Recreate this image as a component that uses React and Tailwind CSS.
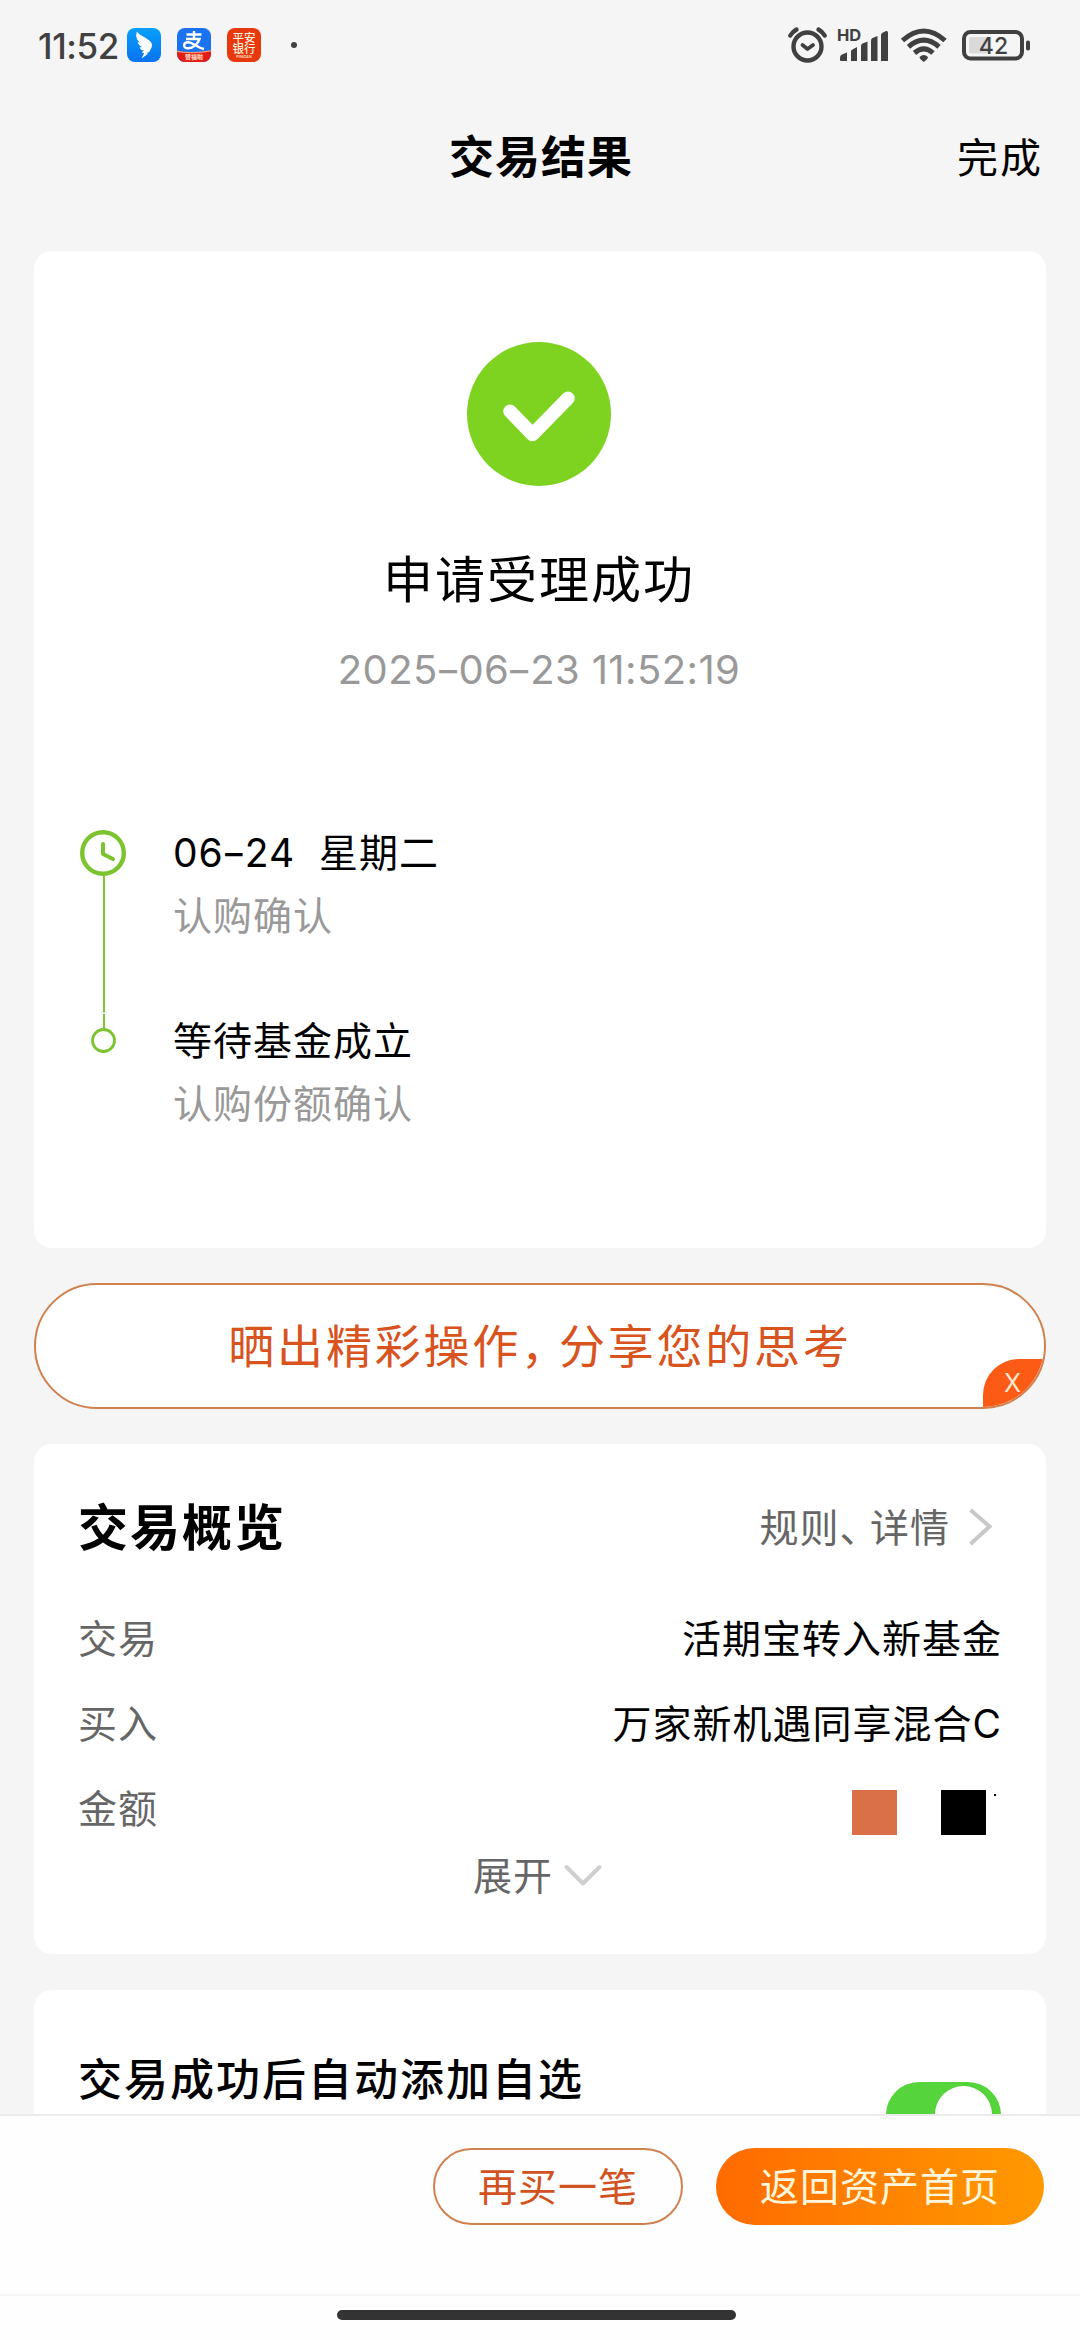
import React, { useState } from "react";

const steps = [
  { title: "06-24  星期二", desc: "认购确认" },
  { title: "等待基金成立", desc: "认购份额确认" },
];

const rows = [
  { label: "交易", value: "活期宝转入新基金" },
  { label: "买入", value: "万家新机遇同享混合C" },
];

// hyphens are drawn wider than the font's own
function Digits({ text }) {
  return text.split(/(-)/).map((part, i) =>
    part === "-" ? (
      <span key={i} className="mx-[1px] inline-block scale-x-140">
        -
      </span>
    ) : (
      <span key={i}>{part}</span>
    )
  );
}

function StatusBar() {
  return (
    <div className="flex h-[90px] items-center justify-between pl-[38px] pr-[50px] text-[#404040]">
      <div className="flex items-center">
        <span className="w-[89px] pt-[1px] text-[35px] font-medium leading-[40px] tracking-[-0.4px]">11:52</span>
        <svg width="34" height="34" viewBox="0 0 34 34">
          <defs>
            <linearGradient id="wing" x1="0" y1="0" x2="0" y2="1">
              <stop offset="0" stopColor="#06a0fb" />
              <stop offset="1" stopColor="#0a72f0" />
            </linearGradient>
          </defs>
          <rect width="34" height="34" rx="8" fill="url(#wing)" />
          <path
            d="M10 3.500C12 7 16.500 8.500 19.500 10.500C22.500 12.300 25.200 14.500 25 17.500C24.800 19.800 23.300 21.500 22.300 24L20.200 24.800L20.800 26L14.500 30.500L17.200 25.200L14.600 24.600L17 22.600C14.600 22 13 21 12.600 19.400L15.200 19C13 18 11.200 16.500 10.500 14.200L13 14.600C10.800 12.800 9.600 11 9.300 8.500C9.100 6.700 9.400 5 10 3.500Z"
            fill="#fff"
          />
        </svg>
        <svg className="ml-[16px]" width="34" height="34" viewBox="0 0 34 34">
          <defs>
            <clipPath id="payClip">
              <rect width="34" height="34" rx="8" />
            </clipPath>
          </defs>
          <g clipPath="url(#payClip)">
            <rect width="34" height="34" fill="#1b72ee" />
            <path
              d="M9.500 6.500H24.500M17 3V10.500M9 11H22.500C21 15.500 16.500 20.300 11 20.300C5.500 20.300 6 14 11.500 14.300C16.500 14.800 20 19.500 27 21"
              fill="none"
              stroke="#fff"
              strokeWidth="2.400"
            />
            <path d="M0 23.500Q17 26 34 23V34H0Z" fill="#e21c16" />
            <path d="M0 23.300Q17 26 34 22.800" fill="none" stroke="#f59a70" strokeWidth="1.200" />
            <text x="17" y="31.300" textAnchor="middle" fontSize="6" fontWeight="700" fill="#ffe3c8">
              赞福啦
            </text>
          </g>
        </svg>
        <div className="ml-[16px] flex size-[34px] flex-col items-center rounded-[8px] bg-[#e8380d] pt-[5px] text-[11.500px] font-medium leading-[11px] text-[#fff0dc]">
          <span>平安</span>
          <span>银行</span>
          <span className="text-[4px] leading-[4px]">PINGAN</span>
        </div>
        <span className="ml-[30px] size-[6px] rounded-full bg-[#404040]" />
      </div>
      <svg width="243" height="38" viewBox="786 26 243 38" fill="none" stroke="#404040">
        <circle cx="806.500" cy="46.500" r="14" strokeWidth="4.400" />
        <path d="M801.500 45L806.500 49L812 45" strokeWidth="3.800" strokeLinecap="round" strokeLinejoin="round" />
        <path d="M789.300 35.500Q791.500 31.800 795.500 29.500M823.700 35.500Q821.500 31.800 817.500 29.500" strokeWidth="4.400" strokeLinecap="round" />
        <text x="836" y="41" fontSize="16.500" fontWeight="700" fill="#404040" stroke="none">
          HD
        </text>
        <g fill="#404040" stroke="none">
          <path d="M839 57.500Q839 55.500 841 54.500L846 52.500V61H840Q839 61 839 60Z" />
          <path d="M850 51.500Q850 50 851.500 49.500L856 47V61H850Z" />
          <path d="M860 46Q860 44 861.500 43.500L866.500 41.500V61H860Z" />
          <path d="M870 40.500Q870 38.800 871.500 38L876.500 36V61H870Z" />
          <path d="M880 35Q880 33.500 881.500 32.700L885 31Q887 30.500 887 32.500V61H880Z" />
          <path d="M918.500 57Q922.800 53 927 57Q927 59 922.800 62Q918.500 59 918.500 57Z" />
        </g>
        <path d="M901.500 40.500Q922.800 21.500 944 40.500" strokeWidth="5" />
        <path d="M907.500 46.800Q922.800 33.600 938 46.800" strokeWidth="5" />
        <path d="M913.500 53Q922.800 44.800 932 53" strokeWidth="5" />
        <rect x="963" y="32" width="58" height="26.500" rx="6.500" strokeWidth="4" />
        <rect x="968" y="37" width="19" height="16.500" rx="2" fill="#dadada" stroke="none" />
        <rect x="1025" y="40.500" width="4" height="10" rx="1.800" fill="#404040" stroke="none" />
        <text x="992.500" y="54" textAnchor="middle" fontSize="23" fontWeight="500" fill="#404040" stroke="none">
          42
        </text>
      </svg>
    </div>
  );
}

function ResultCard() {
  return (
    <section className="mx-[34px] h-[997px] rounded-[18px] bg-white pt-[91px]">
      <div className="flex flex-col items-center pr-[2px]">
        <svg width="144" height="144" viewBox="0 0 144 144">
          <circle cx="72" cy="72" r="72" fill="#7ed321" />
          <path d="M43 69.300L65.500 92.500L101 56.300" fill="none" stroke="#fff" strokeWidth="13.500" strokeLinecap="round" strokeLinejoin="round" />
        </svg>
        <h2 className="mt-[64px] text-[50px] leading-[60px] tracking-[2px]">申请受理成功</h2>
        <p className="mt-[35px] text-[40px] leading-[50px] tracking-[0.400px] text-[#999]">
          <Digits text="2025-06-23 11:52:19" />
        </p>
      </div>

      {/* timeline */}
      <div className="mt-[133px] flex pl-[46px]">
        <svg width="46" height="226" viewBox="0 0 46 226" fill="none" stroke="#7bc42f">
          <circle cx="23" cy="25" r="20.800" strokeWidth="4.400" />
          <path d="M23 16V26L33 31" strokeWidth="4" strokeLinecap="round" strokeLinejoin="round" />
          <path d="M24 48V184.500M24 186V201" strokeWidth="2" />
          <circle cx="23.500" cy="212.500" r="11" strokeWidth="2.800" />
        </svg>
        <div className="ml-[47px] flex flex-col gap-[75px]">
          {steps.map((s) => (
            <div key={s.desc}>
              <p className="whitespace-pre text-[39px] leading-[50px] tracking-[1px]">
                <Digits text={s.title} />
              </p>
              <p className="mt-[13px] text-[39px] leading-[50px] tracking-[1px] text-[#999]">{s.desc}</p>
            </div>
          ))}
        </div>
      </div>
    </section>
  );
}

function ShareBanner({ onClose }) {
  return (
    <div className="relative mx-[34px] mt-[35px] flex h-[126px] items-center justify-center overflow-hidden rounded-full border-2 border-[#d0814f] bg-white">
      <p className="text-[46px] leading-[60px] tracking-[2.800px] text-[#d9531e]">
        晒出精彩操作<span className="mr-[12px] [font-feature-settings:'halt']">，</span>分享您的思考
      </p>
      <button
        onClick={onClose}
        className="absolute bottom-0 right-0 flex h-[48px] w-[61px] items-center justify-center rounded-tl-[36px] bg-[#fb5b14] pr-[2px] pt-[1px] text-[25px] text-[#ffe9d2]"
      >
        X
      </button>
    </div>
  );
}

function Overview() {
  return (
    <section className="mx-[34px] mt-[35px] h-[510px] rounded-[18px] bg-white pl-[44px] pr-[45px] pt-[54px] text-[39px] tracking-[1px]">
      <div className="flex h-[60px] items-center justify-between">
        <h3 className="text-[50px] font-bold leading-[60px] tracking-[2px]">交易概览</h3>
        <div className="flex items-center pr-[7px] text-[#666]">
          <span>
            规则<span className="mr-[10px] [font-feature-settings:'halt']">、</span>详情
          </span>
          <svg className="ml-[18px]" width="26" height="40" viewBox="0 0 26 40" fill="none">
            <path d="M2.500 2L21.500 18.500L2.500 36" stroke="#c8c8c8" strokeWidth="4" />
          </svg>
        </div>
      </div>
      <div className="mt-[39px]">
        {rows.map((r) => (
          <div key={r.label} className="flex h-[85px] items-center justify-between">
            <span className="text-[#666]">{r.label}</span>
            <span className="-mr-[1px]">{r.value}</span>
          </div>
        ))}
        <div className="flex h-[85px] items-center justify-between">
          <span className="text-[#666]">金额</span>
          <div className="flex pr-[5px] pt-[5px]">
            <span className="size-[45px] bg-[#da7047]" />
            <span className="ml-[44px] size-[45px] bg-black" />
            <span className="ml-[8px] mt-[4px] h-[2px] w-[2px] bg-black" />
          </div>
        </div>
      </div>
      <button className="mx-auto -mt-[1px] flex h-[50px] items-center pr-[4px] tracking-[1px] text-[#666]">
        展开
        <svg className="ml-[11px]" width="38" height="24" viewBox="0 0 38 24" fill="none">
          <path d="M2.500 3L19 19.500L35.500 3" stroke="#cfcfcf" strokeWidth="4" strokeLinecap="round" strokeLinejoin="round" />
        </svg>
      </button>
    </section>
  );
}

export default function App() {
  const [showShare, setShowShare] = useState(true);
  const [autoAdd, setAutoAdd] = useState(true);

  return (
    <div className="flex h-[2340px] w-[1080px] flex-col overflow-hidden bg-[#f5f5f5] font-[Inter,'Noto_Sans_CJK_SC',sans-serif] text-black">
      <div className="min-h-0 flex-1 overflow-hidden">
        <StatusBar />
        <header className="mb-[25px] grid h-[136px] grid-cols-3 items-center">
          <span />
          <h1 className="pl-[2px] text-center text-[45px] font-bold leading-[60px] tracking-[1px]">交易结果</h1>
          <button className="justify-self-end pr-[37px] text-[41px] leading-[60px] tracking-[2px]">完成</button>
        </header>
        <ResultCard />
        {showShare && <ShareBanner onClose={() => setShowShare(false)} />}
        <Overview />
        <section className="mx-[34px] mt-[36px] flex h-[200px] items-start justify-between rounded-[18px] bg-white pl-[44px] pr-[45px]">
          <h3 className="mt-[60px] text-[44px] font-medium leading-[60px] tracking-[2px]">交易成功后自动添加自选</h3>
          <button
            onClick={() => setAutoAdd(!autoAdd)}
            className={`mt-[92px] flex h-[66px] w-[115px] rounded-full p-[4px] pr-[9px] ${
              autoAdd ? "justify-end bg-[#55d43b]" : "justify-start bg-gray-300"
            }`}
          >
            <span className="size-[57px] rounded-full bg-white shadow" />
          </button>
        </section>
      </div>

      <footer className="h-[226px] shrink-0 border-t-2 border-[#ebebeb] bg-[#fefefe]">
        <div className="flex h-[180px] items-start justify-end gap-[33px] border-b-2 border-[#f5f5f5] pr-[36px] pt-[32px] text-[39px] tracking-[1px]">
          <button className="h-[77px] w-[250px] rounded-full border-2 border-[#d0814f] pt-[1px] text-[#d2521f]">再买一笔</button>
          <button className="h-[77px] w-[328px] rounded-full bg-linear-to-r from-[#ff6a00] to-[#ff9900] pt-[1px] text-[#fff6dc]">
            返回资产首页
          </button>
        </div>
        <div className="ml-[337px] mt-[14px] h-[10px] w-[399px] rounded-full bg-[#333]" />
      </footer>
    </div>
  );
}
